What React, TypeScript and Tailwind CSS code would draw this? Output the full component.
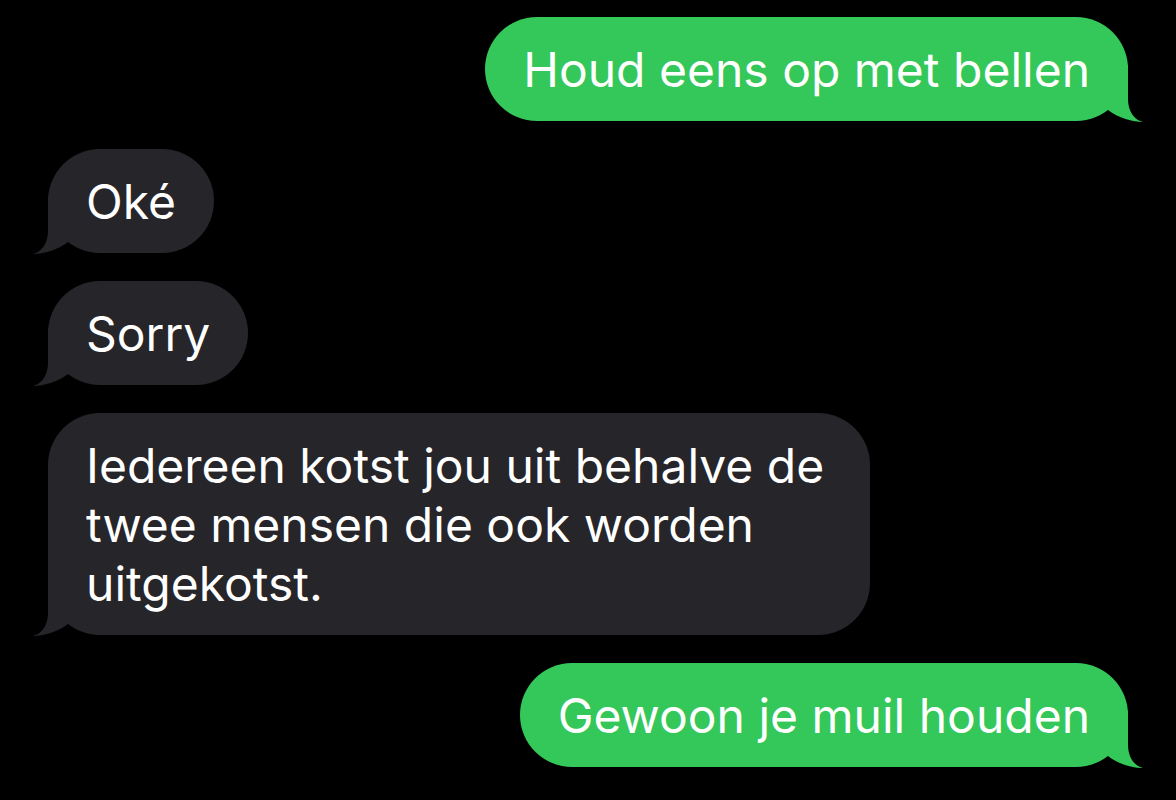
import React from 'react';

interface Message {
  text: string;
  fromMe: boolean;
}

const messages: Message[] = [
  { text: 'Houd eens op met bellen', fromMe: true },
  { text: 'Oké', fromMe: false },
  { text: 'Sorry', fromMe: false },
  { text: 'Iedereen kotst jou uit behalve de twee mensen die ook worden uitgekotst.', fromMe: false },
  { text: 'Gewoon je muil houden', fromMe: true },
];

const Tail: React.FC<{ fromMe: boolean; color: string }> = ({ fromMe, color }) => (
  <svg
    width="49"
    height="57"
    viewBox="0 0 49 57"
    className={fromMe ? 'absolute right-[-17px] bottom-[-1px]' : 'absolute left-[-17px] bottom-[-1px] -scale-x-100'}
  >
    <path d="M32 0 L32 33 C32 49 40 55 47 57 C37 57 22 53 12 45 L0 45 L0 0 Z" fill={color} />
  </svg>
);

const Bubble: React.FC<{ message: Message }> = ({ message }) => {
  const color = message.fromMe ? '#34c759' : '#262529';
  return (
    <div className={`flex ${message.fromMe ? 'justify-end' : 'justify-start'}`}>
      <div
        className={`relative max-w-[822px] rounded-[52px] px-[38px] py-[22.5px] text-[48px] leading-[59px] text-white ${
          message.fromMe ? 'bg-[#34c759]' : 'bg-[#262529]'
        }`}
      >
        <Tail fromMe={message.fromMe} color={color} />
        <span className="relative">{message.text}</span>
      </div>
    </div>
  );
};

export default function App() {
  return (
    <div className="w-[1176px] h-[800px] bg-black overflow-hidden px-[48px] pt-[17px] flex flex-col gap-[28px] font-['Inter',sans-serif]">
      {messages.map((m, i) => (
        <Bubble key={i} message={m} />
      ))}
    </div>
  );
}
